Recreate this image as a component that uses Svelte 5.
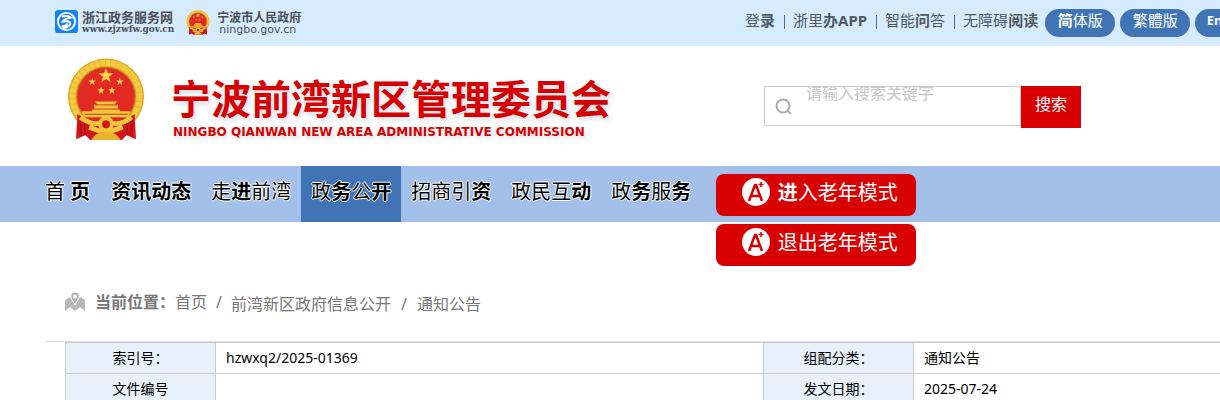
<script>
  const quick = [
    [['登', 0], ['录', 1]],
    [['浙里', 0], ['办APP', 1]],
    [['智能', 0], ['问', 1], ['答', 0]],
    [['无障碍', 0], ['阅读', 1]],
  ];
  const langs = [
    [['简', 1], ['体版', 0]],
    [['繁體版', 0]],
  ];
  const menu = [
    { parts: [['首 ', 0], ['页', 1]] },
    { parts: [['资讯动态', 1]] },
    { parts: [['走', 0], ['进', 1], ['前湾', 0]] },
    { parts: [['政', 0], ['务', 1], ['公', 0], ['开', 1]], active: true },
    { parts: [['招商引', 0], ['资', 1]] },
    { parts: [['政民互', 0], ['动', 1]] },
    { parts: [['政', 0], ['务', 1], ['服', 0], ['务', 1]] },
  ];
  const modes = [
    [['进', 1], ['入老年模式', 0]],
    [['退出老年模式', 0]],
  ];
  const rows = [
    ['索引号：', 'hzwxq2/2025-01369', '组配分类：', '通知公告'],
    ['文件编号', '', '发文日期：', '2025-07-24'],
  ];
  let keyword = $state('');
</script>

{#snippet mixed(parts)}{#each parts as [text, bold]}{#if bold}<b>{text}</b>{:else}{text}{/if}{/each}{/snippet}

{#snippet star(x, y, r)}
  <path
    transform="translate({x} {y}) scale({r})"
    fill="#f8d548"
    d="M0-1L.24-.32L.95-.31L.38.12L.59.81L0 .4L-.59.81L-.38.12L-.95-.31L-.24-.32Z"
  />
{/snippet}

{#snippet emblem(cls)}
  <svg class={cls} viewBox="0 0 78 84" aria-hidden="true">
    <path fill="#d3141b" d="M10 56L68 56L69 82L60 78L55 83L23 83L18 78L9 82Z" />
    <circle cx="39" cy="39" r="38.500" fill="#e0a91f" />
    <circle cx="39" cy="39" r="34" fill="none" stroke="#f3ca43" stroke-width="6" stroke-dasharray="5 0.500" />
    <circle cx="39" cy="39" r="29.500" fill="#e32a25" stroke="#b77a12" />
    {@render star(39, 18, 8)}
    {@render star(25, 24, 4)}
    {@render star(53, 24, 4)}
    {@render star(34, 33, 4)}
    {@render star(45, 33, 4)}
    <path fill="#f2c53b" d="M28 44H50L48 47H51V51H27V47H30ZM25 52H53V54H64L61 60H17L14 54H25Z" />
    <path stroke="#b9411b" d="M28 47.500H50M17 57H61" fill="none" />
    <path fill="#d3141b" d="M10 57Q21 64 39 64Q57 64 68 57L69 82L60 78L53 83H25L18 78L9 82Z" />
    <path d="M13 64L14 79M17 66L18 77M61 66L60 77M65 64L64 79" stroke="#8f0d10" fill="none" />
    <path fill="none" stroke="#f2c53b" stroke-width="5" d="M13 60Q24 68 32 66M65 60Q54 68 46 66M22 70L38 76L56 70" />
    <circle cx="39" cy="67" r="6" fill="none" stroke="#f2c53b" stroke-width="4" />
    <path fill="#e8b42c" d="M28 78Q39 71 50 78L54 83H24Z" />
  </svg>
{/snippet}

<div class="page">
  <header class="top">
    <div class="portals">
      <a class="portal zj" href="#zj">
        <svg class="swirl" viewBox="0 0 24 24" aria-hidden="true">
          <rect width="24" height="24" rx="3" fill="#1683f5" />
          <circle cx="12" cy="12" r="9" fill="none" stroke="#fff" stroke-width="2" />
          <path d="M7 7Q13 5 17 8Q10 9 8 12Q16 11 16 14Q15 18 8 19M7 17Q12 17 13 14" fill="none" stroke="#fff" stroke-width="2" />
        </svg>
        <span class="words"><strong>浙江政务服务网</strong><small>www.zjzwfw.gov.cn</small></span>
      </a>
      <a class="portal nb" href="#nb">
        {@render emblem('mini')}
        <span class="words"><strong>宁波市人民政府</strong><small>ningbo.gov.cn</small></span>
      </a>
    </div>
    <nav class="quick">
      {#each quick as parts}
        <a href="#quick">{@render mixed(parts)}</a>
      {/each}
    </nav>
    <div class="langs">
      {#each langs as parts}
        <button>{@render mixed(parts)}</button>
      {/each}
      <button class="en"><b>English</b></button>
    </div>
  </header>

  <div class="brand">
    <a class="logo" href="#home">
      {@render emblem('crest')}
      <span class="title">
        <strong>宁波前湾新区管理委员会</strong>
        <small>NINGBO QIANWAN NEW AREA ADMINISTRATIVE COMMISSION</small>
      </span>
    </a>
    <form class="search" onsubmit={(e) => e.preventDefault()}>
      <div class="field">
        <svg viewBox="0 0 18 18" aria-hidden="true">
          <circle cx="8" cy="8" r="6.500" /><path d="M12.500 12.500L16 16" />
        </svg>
        <input aria-label="搜索" placeholder="请输入搜索关键字" bind:value={keyword} />
      </div>
      <button>搜索</button>
    </form>
  </div>

  <div class="bar">
    <nav class="menu">
      {#each menu as item}
        <a href="#menu" class:active={item.active}>{@render mixed(item.parts)}</a>
      {/each}
    </nav>
    <div class="modes">
      {#each modes as parts}
        <button>
          <svg viewBox="0 0 28 28" aria-hidden="true">
            <circle cx="14" cy="14" r="14" fill="#fff" />
            <path d="M7 23L13 7H14L20 23M9 18H18" fill="none" stroke="#d80000" stroke-width="2.500" />
            <path d="M19 4V9M16.500 6.500H21.500" fill="none" stroke="#d80000" stroke-width="1.500" />
          </svg>
          <span>{@render mixed(parts)}</span>
        </button>
      {/each}
    </div>
  </div>

  <main>
    <nav class="crumbs">
      <svg viewBox="0 0 20 20" aria-hidden="true">
        <path d="M0 8L5 5L10 9L15 5L20 8V19L15 15L10 19L5 15L0 19Z" fill="#b8b8b8" />
        <path d="M10 13L6 6Q5 0 10 0Q15 0 14 6Z" fill="#b0b0b0" stroke="#fff" />
        <circle cx="10" cy="4.500" r="2" fill="#fff" />
      </svg>
      <b>当前位置：</b>
      <a href="#home">首页</a>
      <i>/</i>
      <span class="trail"><a href="#open">前湾新区政府信息公开</a><i>/</i><a href="#notice">通知公告</a></span>
    </nav>
    <div class="sheet">
      <table>
        <colgroup><col class="key" /><col class="wide" /><col class="key" /><col /></colgroup>
        <tbody>
          {#each rows as [k1, v1, k2, v2]}
            <tr><th scope="row">{k1}</th><td>{v1}</td><th scope="row">{k2}</th><td>{v2}</td></tr>
          {/each}
        </tbody>
      </table>
    </div>
  </main>
</div>

<style>
  :global(body) { margin: 0; overflow: hidden; }
  .page {
    overflow: hidden;
    background: #fff;
    font-family: "Noto Sans", "Noto Sans CJK SC", sans-serif;
    font-size: 16px;
  }
  a { color: inherit; text-decoration: none; }
  button { border: 0; font: inherit; color: #fff; cursor: pointer; white-space: nowrap; }

  .top { display: flex; height: 46px; background: #d7ebff; color: #4e5a62; }
  .portals { display: flex; flex: 0 0 680px; padding-left: 55px; gap: 12px; box-sizing: border-box; }
  .portal { display: flex; align-items: flex-start; padding-top: 10px; gap: 4px; }
  .swirl { width: 23px; height: 23px; }
  .words { display: flex; flex-direction: column; color: #4a4f55; white-space: nowrap; }
  .words strong { font-size: 13px; line-height: 15px; }
  .words small { font-size: 10px; line-height: 10px; }
  .zj small { font-family: "DejaVu Serif", serif; font-size: 9px; font-weight: bold; line-height: 9px; }
  .nb { gap: 7px; }
  .nb strong { font-size: 12px; }
  .nb small { font-family: "DejaVu Sans", sans-serif; font-size: 11px; padding-left: 2px; }
  .mini { width: 24px; height: 25px; }
  .quick { display: flex; flex: none; padding-left: 56px; }
  .quick a { position: relative; padding: 8px 9px 0; font-size: 15px; line-height: 24px; white-space: nowrap; }
  .quick a:last-child { padding-right: 7px; }
  .quick a + a::before { content: ""; position: absolute; left: 0; top: 15px; height: 14px; border-left: 1px solid #5f6a72; }
  .langs { display: flex; flex: none; gap: 5px; padding-top: 9px; }
  .langs button { width: 70px; height: 28px; padding: 0 0 6px; border-radius: 14px; background: #4074b5; font-size: 15px; line-height: 22px; }
  .langs .en { font-size: 13px; }

  .brand { display: flex; height: 120px; }
  .logo { display: flex; flex: 0 0 764px; padding: 12px 0 0 67px; box-sizing: border-box; gap: 26px; }
  .crest { width: 78px; height: 83px; }
  .title { display: flex; flex-direction: column; padding-top: 12px; color: #d70000; white-space: nowrap; text-shadow: 2px 3px 5px #d3dce2; }
  .title strong { font: 700 40px/54px "Noto Sans CJK SC", sans-serif; }
  .title small { padding-left: 2px; font: 700 12px/16px "DejaVu Sans", sans-serif; }
  .search { display: flex; align-items: flex-start; padding-top: 40px; }
  .field { display: flex; align-items: flex-start; overflow: hidden; width: 257px; height: 40px; box-sizing: border-box; border: 1px solid #ccc; }
  .field svg { flex: none; width: 18px; height: 18px; margin: 11px 13px 0 10px; fill: none; stroke: #aaa; stroke-width: 2; }
  .field input { width: 200px; height: 24px; margin-top: -7px; padding: 0; border: 0; outline: 0; background: none; font: 16px/24px "Noto Sans CJK SC", sans-serif; }
  .field input::placeholder { color: #c6c6c6; }
  .search button { width: 60px; height: 42px; padding: 0 0 8px; background: #d80000; }

  .bar { display: flex; height: 56px; background: #a2c0e9; }
  .menu { display: flex; padding-left: 35px; }
  .menu a {
    padding: 0 10px;
    font-size: 20px;
    line-height: 52px;
    color: #000;
    white-space: nowrap;
    text-shadow: 1px 0 #fff, -1px 0 #fff, 0 1px #fff, 0 -1px #fff;
  }
  .menu a:first-child { padding-right: 11px; }
  .menu .active { background: #4074b5; }
  .modes { display: flex; flex-direction: column; gap: 8px; padding: 8px 0 0 15px; }
  .modes button {
    display: flex;
    flex: none;
    justify-content: center;
    width: 200px;
    height: 42px;
    padding: 4px 0 0 7px;
    gap: 8px;
    border-radius: 8px;
    background: #d80000;
    font-size: 20px;
    line-height: 30px;
  }
  .modes svg { width: 28px; height: 28px; }

  .crumbs { display: flex; padding: 69px 0 0 65px; height: 50px; color: #777; line-height: 22px; white-space: nowrap; }
  .crumbs svg { width: 20px; height: 20px; margin: 1px 10px 0 0; }
  .crumbs i { margin: 0 9px; font-style: normal; }
  .trail { padding-top: 2px; }
  .trail i { margin: 0 10px; }
  .sheet { margin-left: 45px; padding-left: 20px; border-top: 1px solid #ddd; }
  table { width: 100%; table-layout: fixed; border-collapse: collapse; font-size: 14px; line-height: 30px; color: #000; }
  .key { width: 150px; }
  .wide { width: 548px; }
  th, td { height: 30px; padding: 0; border: 1px solid #ccc; text-align: left; }
  th { background: #e8f1fa; font-weight: 400; text-align: center; }
  td { padding-left: 10px; }
  td:last-child { border-right: 0; }
</style>
